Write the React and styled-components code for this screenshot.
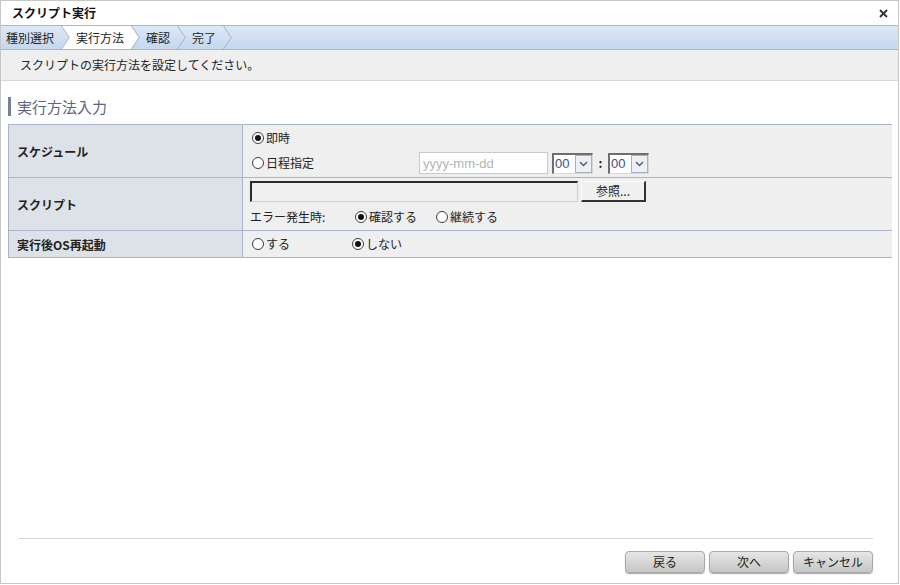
import React from 'react';
import styled, { createGlobalStyle } from 'styled-components';

const GlobalStyle = createGlobalStyle`
    html, body {
        margin: 0;
        padding: 0;
        background: #ffffff;
    }
    body {
        font-family: "Noto Sans CJK JP", "Noto Sans", sans-serif;
        font-size: 12px;
        color: #222;
    }
`
const Frame = styled.div`
    box-sizing: border-box;
    width: 899px;
    height: 584px;
    border: 1px solid #c6c6c6;
    display: flex;
    flex-direction: column;
    background: #fff;
`
const TitleBar = styled.div`
    height: 24px;
    display: flex;
    align-items: center;
    justify-content: space-between;
    padding: 0 10px 0 11px;
`
const Title = styled.h1`
    margin: 0;
    font-size: 12px;
    font-weight: 700;
    line-height: 1;
    color: #111;
`
const Close = styled.svg`
    width: 9px;
    height: 9px;
    cursor: pointer;
`
const Steps = styled.div`
    height: 23px;
    display: flex;
    align-items: stretch;
    border-top: 1px solid #a9b5c8;
    border-bottom: 1px solid #a9b5c8;
    background: linear-gradient(#dde8f6, #c5d8ef);
`
const Step = styled.div`
    display: flex;
    align-items: center;
    padding: ${p => p.$first ? '0 7px 0 5px' : '0 7px 0 6px'};
    background: ${p => p.$active ? '#ffffff' : 'transparent'};
    line-height: 1;
    color: #222;
`
const Chevron = styled.svg`
    width: 9px;
    height: 23px;
    display: block;
`
const Notice = styled.div`
    height: 30px;
    display: flex;
    align-items: center;
    padding-left: 19px;
    background: #efefef;
    border-bottom: 1px solid #d4d9df;
    line-height: 1;
`
const Content = styled.div`
    flex: 1;
    padding: 16px 6px 0 7px;
`
const Heading = styled.h2`
    margin: 0 0 8px 0;
    height: 19px;
    display: flex;
    align-items: center;
    padding-left: 6px;
    border-left: 3px solid #787e9f;
    font-size: 15px;
    font-weight: 400;
    color: #5d6584;
    line-height: 1;
`
const Table = styled.div`
    display: grid;
    grid-template-columns: 234px 1fr;
    border-top: 1px solid #a9b4c9;
    border-left: 1px solid #a9b4c9;
`
const Label = styled.div`
    height: ${p => p.$h}px;
    display: flex;
    align-items: center;
    padding-left: 8px;
    background: #dde1e8;
    border-right: 1px solid #a9b4c9;
    border-bottom: 1px solid #a9b4c9;
    font-weight: 700;
    color: #222;
`
const Value = styled.div`
    height: ${p => p.$h}px;
    box-sizing: border-box;
    display: flex;
    flex-direction: column;
    justify-content: ${p => p.$center ? 'center' : 'flex-start'};
    gap: ${p => p.$gap || 0}px;
    padding: ${p => p.$pt || 0}px 0 0 7px;
    background: #efefef;
    border-bottom: 1px solid #a9b4c9;
`
const Line = styled.div`
    display: flex;
    align-items: center;
    height: ${p => p.$h}px;
`
const Option = styled.label`
    display: inline-flex;
    align-items: center;
    width: ${p => p.$w ? p.$w + 'px' : 'auto'};
    line-height: 1;
    color: #222;
`
const Radio = styled.span`
    box-sizing: border-box;
    width: 12px;
    height: 12px;
    margin: 0 2px 0 2px;
    border-radius: 50%;
    border: 1px solid #3c3c3c;
    background: #fff;
    display: inline-flex;
    align-items: center;
    justify-content: center;

    &::after {
        content: '';
        width: 6px;
        height: 6px;
        border-radius: 50%;
        background: ${p => p.$on ? '#111' : 'transparent'};
    }
`
const DateBox = styled.div`
    box-sizing: border-box;
    width: 129px;
    height: 22px;
    display: flex;
    align-items: center;
    padding-left: 3px;
    background: #fff;
    border: 1px solid #c9c9c9;
    font-family: "Liberation Sans", Arial, sans-serif;
    font-size: 13px;
    color: #b4b4b4;
`
const Select = styled.div`
    box-sizing: border-box;
    width: 41px;
    height: 21px;
    margin-left: ${p => p.$ml || 0}px;
    display: flex;
    align-items: stretch;
    background: #fff;
    border-top: 2px solid #6e6e6e;
    border-left: 2px solid #6e6e6e;
    border-right: 1px solid #d8d8d8;
    border-bottom: 1px solid #d8d8d8;
    font-family: "Liberation Sans", Arial, sans-serif;
    font-size: 13px;
    color: #3d4f80;

    span {
        flex: 1;
        display: flex;
        align-items: center;
        padding-left: 1px;
    }
`
const Arrow = styled.div`
    width: 17px;
    box-sizing: border-box;
    display: flex;
    align-items: center;
    justify-content: center;
    background: #eceff3;
    border: 1px solid #a9b1bd;
`
const Colon = styled.span`
    width: 15px;
    text-align: center;
    font-weight: 700;
    line-height: 1;
`
const PathInput = styled.div`
    box-sizing: border-box;
    width: 328px;
    height: 21px;
    background: #f0f0f0;
    border-top: 2px solid #2b2b2b;
    border-left: 2px solid #2b2b2b;
    border-right: 1px solid #d0d0d0;
    border-bottom: 1px solid #d0d0d0;
`
const Browse = styled.button`
    box-sizing: border-box;
    width: 65px;
    height: 21px;
    margin-left: 3px;
    padding: 0;
    background: #f0f0f0;
    border-top: 1px solid #ffffff;
    border-left: 1px solid #ffffff;
    border-right: 2px solid #333;
    border-bottom: 2px solid #333;
    font-family: inherit;
    font-size: 12px;
    color: #222;
    line-height: 1;
`
const ErrLabel = styled.span`
    width: 103px;
    line-height: 1;
`
const Footer = styled.div`
    padding: 0 25px 10px 18px;
`
const Rule = styled.div`
    border-top: 1px solid #d6d6d6;
    margin-bottom: 12px;
`
const Buttons = styled.div`
    display: flex;
    justify-content: flex-end;
    gap: 4px;
`
const Button = styled.button`
    box-sizing: border-box;
    width: 80px;
    height: 22px;
    padding: 0;
    border: 1px solid #a9a9a9;
    border-radius: 4px;
    background: linear-gradient(#e6e6e6, #c6c6c6);
    box-shadow: 0 1px 1px rgba(0, 0, 0, 0.35);
    font-family: inherit;
    font-size: 12px;
    color: #222;
    line-height: 1;
`

const steps = ['種別選択', '実行方法', '確認', '完了']
const activeStep = 1

function Sep({ leftActive, rightActive }) {
    return (
        <Chevron viewBox="0 0 9 23">
            {leftActive && <polygon points="0,0 8,11.5 0,23" fill="#fff" />}
            {rightActive && <polygon points="0,0 8,11.5 0,23 9,23 9,0" fill="#fff" />}
            <polyline points="0.5,0 8.3,11.5 0.5,23" fill="none" stroke="#a2b0c6" strokeWidth="1" />
        </Chevron>
    )
}

function SelectBox({ ml }) {
    return (
        <Select $ml={ml}>
            <span>00</span>
            <Arrow>
                <svg width="9" height="6" viewBox="0 0 9 6">
                    <polyline points="1,1 4.5,4.5 8,1" fill="none" stroke="#4a5a80" strokeWidth="1.4" />
                </svg>
            </Arrow>
        </Select>
    )
}

function App() {
    return (
        <>
            <GlobalStyle />
            <Frame>
                <TitleBar>
                    <Title>スクリプト実行</Title>
                    <Close viewBox="0 0 9 9">
                        <path d="M1 1 L8 8 M8 1 L1 8" stroke="#333" strokeWidth="1.8" />
                    </Close>
                </TitleBar>
                <Steps>
                    {steps.map((s, i) => (
                        <React.Fragment key={s}>
                            <Step $first={i === 0} $active={i === activeStep}>{s}</Step>
                            <Sep leftActive={i === activeStep} rightActive={i + 1 === activeStep} />
                        </React.Fragment>
                    ))}
                </Steps>
                <Notice>スクリプトの実行方法を設定してください。</Notice>
                <Content>
                    <Heading>実行方法入力</Heading>
                    <Table>
                        <Label $h={52}>スケジュール</Label>
                        <Value $h={53} $pt={2} $gap={4}>
                            <Line $h={21}>
                                <Option><Radio $on />即時</Option>
                            </Line>
                            <Line $h={22}>
                                <Option $w={169}><Radio />日程指定</Option>
                                <DateBox>yyyy-mm-dd</DateBox>
                                <SelectBox ml={4} />
                                <Colon>:</Colon>
                                <SelectBox />
                            </Line>
                        </Value>
                        <Label $h={52}>スクリプト</Label>
                        <Value $h={53} $pt={3} $gap={6}>
                            <Line $h={21}>
                                <PathInput />
                                <Browse>参照...</Browse>
                            </Line>
                            <Line $h={18}>
                                <ErrLabel>エラー発生時:</ErrLabel>
                                <Option $w={81}><Radio $on />確認する</Option>
                                <Option><Radio />継続する</Option>
                            </Line>
                        </Value>
                        <Label $h={26}>実行後OS再起動</Label>
                        <Value $h={27} $center>
                            <Line $h={18}>
                                <Option $w={100}><Radio />する</Option>
                                <Option><Radio $on />しない</Option>
                            </Line>
                        </Value>
                    </Table>
                </Content>
                <Footer>
                    <Rule />
                    <Buttons>
                        <Button>戻る</Button>
                        <Button>次へ</Button>
                        <Button>キャンセル</Button>
                    </Buttons>
                </Footer>
            </Frame>
        </>
    )
}

export default App;
